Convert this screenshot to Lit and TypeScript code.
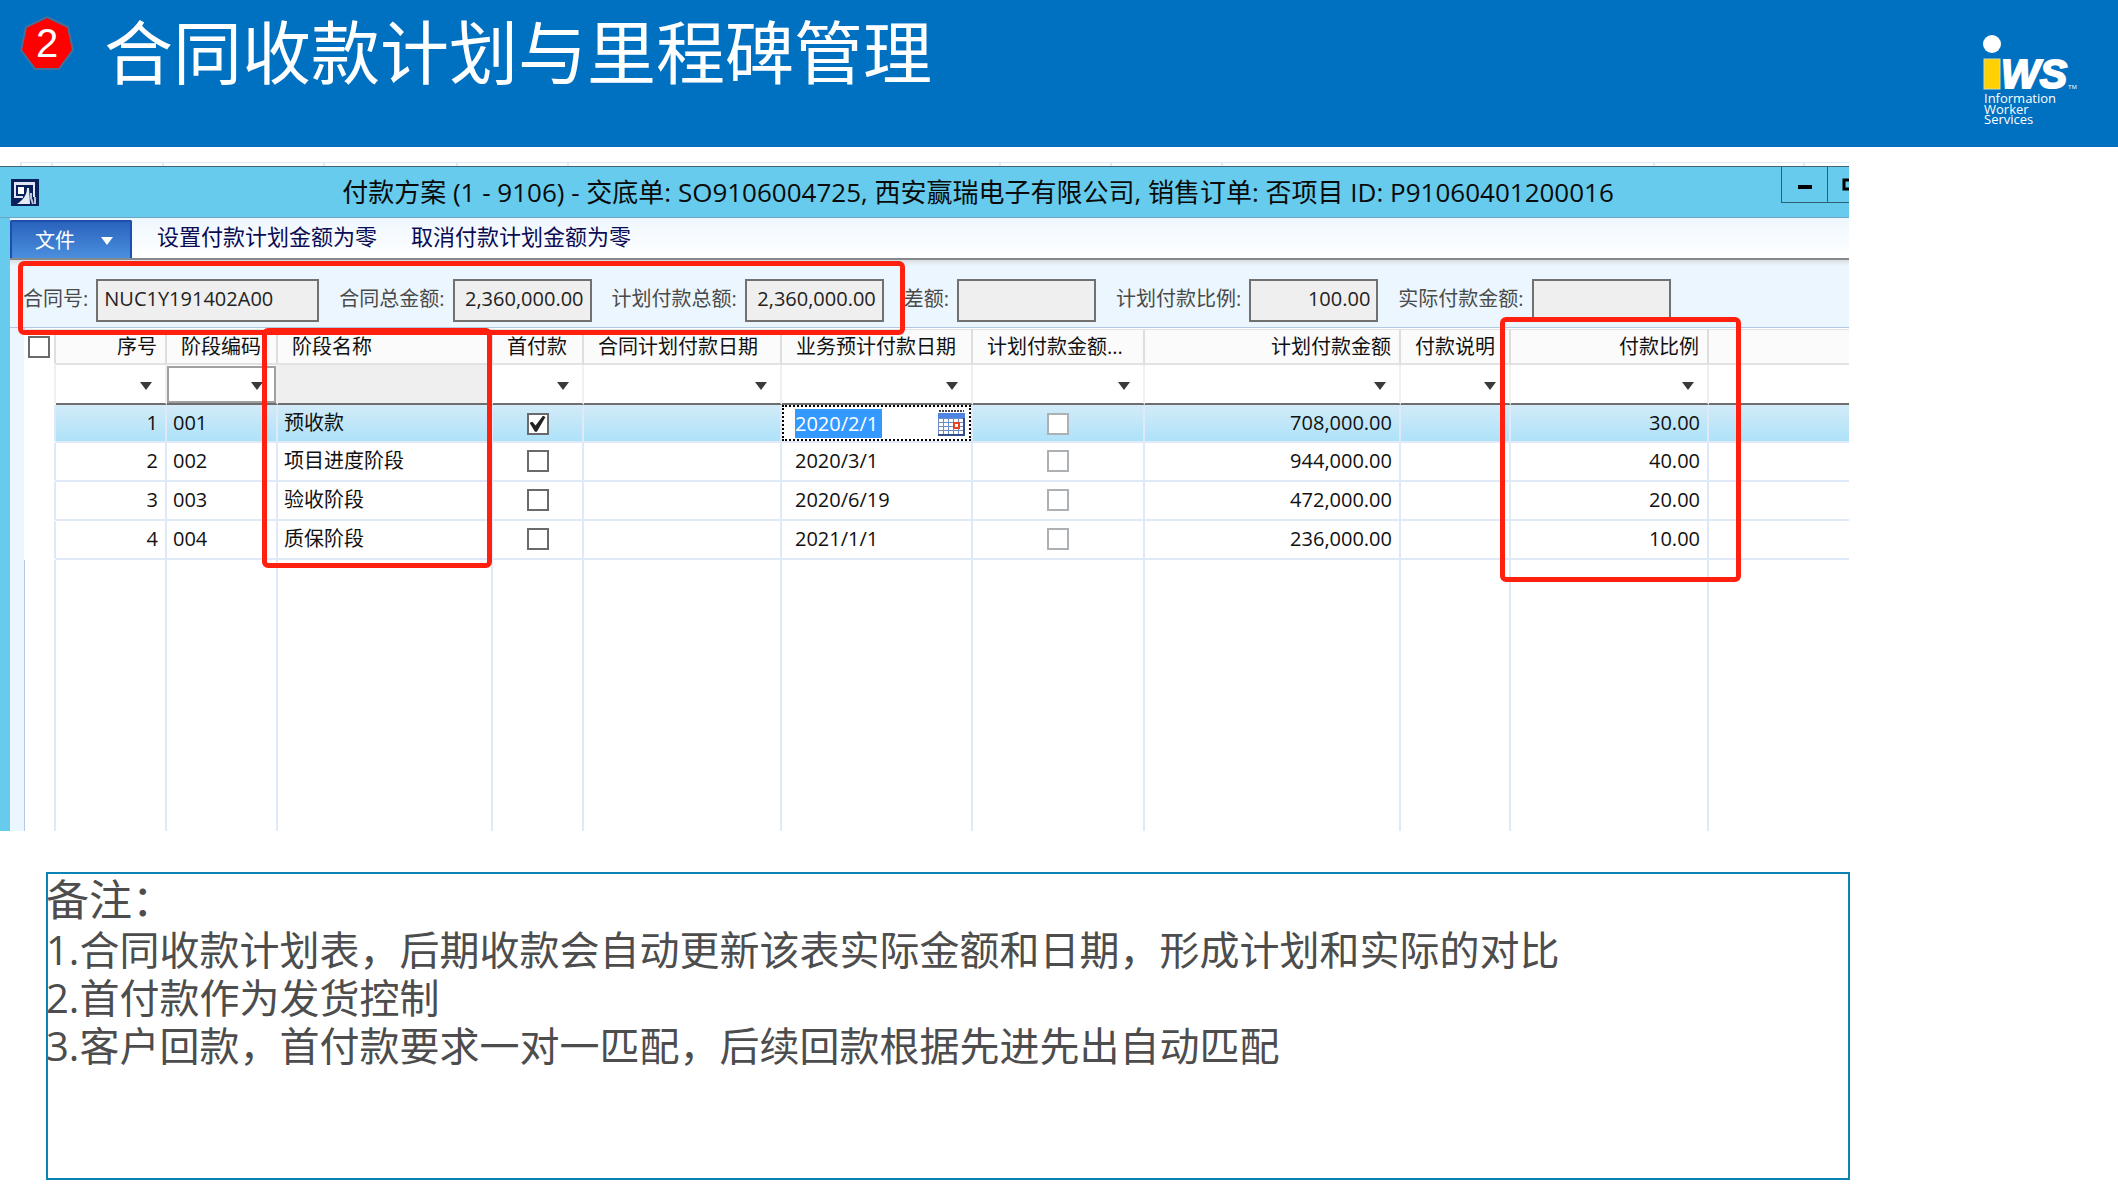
import { LitElement, html, css, svg } from "lit";
import { customElement, property } from "lit/decorators.js";
import { classMap } from "lit/directives/class-map.js";

const caret = html`<svg class="caret" width="12" height="8" viewBox="0 0 12 8" aria-hidden="true">
  <path d="M0 0H12L6 8Z" fill="currentColor" />
</svg>`;

interface Stage {
  seq: number;
  code: string;
  name: string;
  first: boolean;
  date: string;
  amount: string;
  ratio: string;
}

const stages: Stage[] = [
  { seq: 1, code: "001", name: "预收款", first: true, date: "2020/2/1", amount: "708,000.00", ratio: "30.00" },
  { seq: 2, code: "002", name: "项目进度阶段", first: false, date: "2020/3/1", amount: "944,000.00", ratio: "40.00" },
  { seq: 3, code: "003", name: "验收阶段", first: false, date: "2020/6/19", amount: "472,000.00", ratio: "20.00" },
  { seq: 4, code: "004", name: "质保阶段", first: false, date: "2021/1/1", amount: "236,000.00", ratio: "10.00" },
];

const columns = [
  { key: "seq", title: "序号", num: true },
  { key: "code", title: "阶段编码" },
  { key: "name", title: "阶段名称" },
  { key: "first", title: "首付款" },
  { key: "plan", title: "合同计划付款日期" },
  { key: "date", title: "业务预计付款日期" },
  { key: "flag", title: "计划付款金额..." },
  { key: "amount", title: "计划付款金额", num: true },
  { key: "memo", title: "付款说明" },
  { key: "ratio", title: "付款比例", num: true },
];

const fields = [
  { id: "contract", label: "合同号:", value: "NUC1Y191402A00", size: "wide" },
  { id: "total", label: "合同总金额:", value: "2,360,000.00", size: "num" },
  { id: "planned", label: "计划付款总额:", value: "2,360,000.00", size: "num" },
  { id: "diff", label: "差额:", value: "", size: "num" },
  { id: "percent", label: "计划付款比例:", value: "100.00", size: "num short" },
  { id: "actual", label: "实际付款金额:", value: "", size: "num" },
];

@customElement("slide-header")
export class SlideHeader extends LitElement {
  @property() number = "";
  @property() heading = "";

  static styles = css`
    :host {
      display: flex;
      align-items: flex-start;
      height: 147px;
      box-sizing: border-box;
      padding: 0 40px 0 20px;
      background: #0070c0;
      color: #fff;
    }
    .badge {
      display: grid;
      place-items: center;
      width: 54px;
      height: 56px;
      margin-top: 15px;
    }
    .badge svg,
    .badge span {
      grid-area: 1 / 1;
    }
    .badge span {
      font: 40px/40px "Liberation Sans", sans-serif;
    }
    h1 {
      flex: 1;
      margin: 0 0 0 30px;
      font: 400 69px/98px "Noto Sans CJK SC", sans-serif;
      white-space: nowrap;
    }
    .logo {
      flex: none;
      margin-top: 34px;
    }
    .mark {
      font: italic 700 41px "Liberation Sans", sans-serif;
      stroke: #fff;
      stroke-width: 2px;
    }
    .tm {
      font: 6px "Liberation Sans", sans-serif;
    }
    .name {
      font: 13px "Open Sans", sans-serif;
    }
  `;

  render() {
    return html`
      <div class="badge">
        <svg width="54" height="56" viewBox="0 0 54 56" aria-hidden="true">
          <path d="M27 2L48 12L53 35L39 54H15L1 35L6 12Z" fill="#f00" stroke="#41719c" stroke-width="2" />
        </svg>
        <span>${this.number}</span>
      </div>
      <h1>${this.heading}</h1>
      <svg class="logo" width="96" height="96" viewBox="0 0 96 96" fill="#fff" role="img" aria-label="iWS">
        <circle cx="10" cy="10" r="9" />
        <rect x="2" y="25" width="16" height="30" fill="#ffd100" stroke="#d9dca0" stroke-width="1" />
        <text class="mark" x="19" y="54">WS</text>
        <text class="tm" x="86" y="55">TM</text>
        <text class="name" x="2" y="69">Information</text>
        <text class="name" x="2" y="80">Worker</text>
        <text class="name" x="2" y="90">Services</text>
      </svg>
    `;
  }
}

@customElement("payment-grid")
export class PaymentGrid extends LitElement {
  static styles = css`
    :host {
      display: block;
      background: #fff;
    }
    table {
      width: 100%;
      table-layout: fixed;
      border-collapse: separate;
      border-spacing: 0;
      font-size: 20px;
      line-height: 28px;
      color: #111;
    }
    .c-pick { width: 32px; }
    .c-seq, .c-code { width: 111px; }
    .c-name { width: 215px; }
    .c-first { width: 91px; }
    .c-plan, .c-ratio { width: 198px; }
    .c-date { width: 191px; }
    .c-flag { width: 172px; }
    .c-amount { width: 256px; }
    .c-memo { width: 110px; }
    th, td {
      box-sizing: border-box;
      padding: 0;
      border-right: 2px solid #dfe9f8;
      white-space: nowrap;
      text-align: left;
      font-weight: 400;
      overflow: hidden;
    }
    tr > :last-child { border-right: 0; }
    thead th {
      height: 36px;
      padding: 0 0 0 14px;
      border-top: 1px solid #e2e2e2;
      border-bottom: 2px solid #e2e2e2;
      border-right-color: #dedede;
      background: #fbfbfb;
    }
    thead th.num {
      padding: 0 8px 0 0;
      text-align: right;
    }
    thead th.pick {
      padding: 0 0 2px 4px;
      border-bottom-color: #fff;
      background: #fff;
    }
    .filters td {
      height: 40px;
      border-bottom: 2px solid #6e6e6e;
      border-right-color: #f0f0f0;
    }
    .filters td.name { background: #efefef; }
    .filter {
      display: flex;
      align-items: center;
      justify-content: flex-end;
      box-sizing: border-box;
      width: 100%;
      height: 38px;
      padding: 3px 13px 0 0;
      border: 0;
      background: transparent;
      color: #3a3a3a;
    }
    .filter.boxed {
      height: 37px;
      padding-right: 11px;
      border: 2px solid #a0a0a0;
      background: #fff;
    }
    .row td {
      height: 39px;
      padding-bottom: 2px;
      border-bottom: 2px solid #dfe9f8;
    }
    .row.current td { height: 38px; padding-bottom: 0; }
    .row td.num { text-align: right; padding-right: 7px; }
    .row td.code, .row td.name { padding-left: 6px; }
    .row td.date { padding-left: 13px; }
    .row td.check { text-align: center; }
    .row.current td:not(.pick) {
      background: linear-gradient(#d2ebf8, #aee2f9);
    }
    .row.current td.date {
      padding: 0;
    }
    .filters td.pick,
    .row td.pick {
      border-bottom-color: #fff;
      background: #fff;
    }
    .filler td { height: 271px; }
    input[type="checkbox"] {
      appearance: none;
      display: inline-grid;
      place-items: center;
      box-sizing: border-box;
      width: 22px;
      height: 22px;
      margin: 0;
      border: 2px solid #6a6a6a;
      background: #fff;
      vertical-align: middle;
    }
    .check input[type="checkbox"] { margin-bottom: 2px; }
    input[type="checkbox"]:disabled { border-color: #adb1b4; }
    input[type="checkbox"]:checked::before {
      content: "";
      width: 16px;
      height: 16px;
      background: #222;
      clip-path: polygon(0 45%, 18% 38%, 38% 62%, 84% 0, 100% 8%, 46% 100%, 34% 100%);
    }
    .editor {
      display: flex;
      align-items: center;
      justify-content: space-between;
      box-sizing: border-box;
      height: 36px;
      padding: 0 4px 0 11px;
      border: 2px dotted #000;
      background: #fff;
    }
    .editor input {
      width: 87px;
      height: 29px;
      box-sizing: border-box;
      padding: 0;
      border: 0;
      background: #39f;
      color: #fff;
      font: inherit;
    }
    .editor button {
      display: flex;
      padding: 0;
      border: 0;
      background: none;
    }
  `;

  private calendar() {
    return html`<svg width="27" height="26" viewBox="0 0 27 26" aria-hidden="true">
      <rect x="0" y="3" width="27" height="22" fill="#6d8cc4" />
      <rect x="0" y="3" width="27" height="5" fill="#4f83e4" />
      <path d="M1 1H26" stroke="#444" stroke-width="2" stroke-dasharray="2 1" />
      ${[1, 6, 11, 16, 21].map((x) => [9, 13, 17, 21].map((y) => svg`<rect x=${x} y=${y} width="4" height="3" fill="#fff" />`))}
      <path d="M26 8V25H0" stroke="#34508c" stroke-width="2" fill="none" />
      <rect x="16" y="13" width="5" height="5" fill="#fff" stroke="#f0401c" stroke-width="2" />
    </svg>`;
  }

  private row(s: Stage, current: boolean) {
    return html`<tr class=${classMap({ row: true, current })}>
      <td class="pick"></td>
      <td class="num">${s.seq}</td>
      <td class="code">${s.code}</td>
      <td class="name">${s.name}</td>
      <td class="check"><input type="checkbox" aria-label="首付款" .checked=${s.first} /></td>
      <td></td>
      <td class="date">
        ${current
          ? html`<div class="editor">
              <input type="text" aria-label="业务预计付款日期" .value=${s.date} />
              <button type="button" aria-label="日期">${this.calendar()}</button>
            </div>`
          : s.date}
      </td>
      <td class="check"><input type="checkbox" aria-label="计划付款金额" disabled /></td>
      <td class="num">${s.amount}</td>
      <td></td>
      <td class="num">${s.ratio}</td>
      <td></td>
    </tr>`;
  }

  render() {
    return html`<table>
      <colgroup>
        <col class="c-pick" />
        ${columns.map((c) => html`<col class="c-${c.key}" />`)}
        <col />
      </colgroup>
      <thead>
        <tr>
          <th class="pick"><input type="checkbox" aria-label="全选" /></th>
          ${columns.map((c) => html`<th scope="col" class=${classMap({ num: !!c.num })}>${c.title}</th>`)}
          <th></th>
        </tr>
      </thead>
      <tbody>
        <tr class="filters">
          <td class="pick"></td>
          ${columns.map((c) =>
            c.key === "name"
              ? html`<td class="name"></td>`
              : html`<td>
                  <button type="button" class=${classMap({ filter: true, boxed: c.key === "code" })} aria-label=${c.title}>${caret}</button>
                </td>`
          )}
          <td></td>
        </tr>
        ${stages.map((s, i) => this.row(s, i === 0))}
        <tr class="filler">
          <td class="pick"></td>
          ${columns.map(() => html`<td></td>`)}
          <td></td>
        </tr>
      </tbody>
    </table>`;
  }
}

@customElement("payment-window")
export class PaymentWindow extends LitElement {
  static styles = css`
    :host {
      display: block;
      position: relative;
      font-family: "Open Sans", "Noto Sans CJK SC", sans-serif;
    }
    .titlebar {
      display: flex;
      align-items: center;
      height: 52px;
      box-sizing: border-box;
      padding-left: 11px;
      border-top: 1px solid #3f6675;
      border-bottom: 1px solid #6da5c4;
      background: #66cbec;
    }
    .app-icon { flex: none; }
    .title {
      flex: 1;
      margin-left: 136px;
      text-align: center;
      font-size: 26px;
      line-height: 36px;
      color: #0a0a0a;
      white-space: nowrap;
    }
    .controls {
      display: flex;
      align-self: flex-start;
      width: 68px;
      overflow: hidden;
    }
    .controls button {
      flex: none;
      display: flex;
      align-items: center;
      justify-content: center;
      box-sizing: border-box;
      width: 47px;
      height: 36px;
      margin-right: -1px;
      padding: 0;
      border: 1px solid #2f5f72;
      border-top: 0;
      background: transparent;
    }
    .body {
      padding-left: 10px;
      background: linear-gradient(90deg, #66cbec 10px, #ecf6fe 10px);
    }
    .menu {
      display: flex;
      align-items: flex-end;
      height: 42px;
      box-sizing: border-box;
      border-bottom: 2px solid #85898d;
      background: linear-gradient(#eef7fe, #fff);
    }
    .menu button {
      padding: 0;
      border: 0;
      background: none;
      color: #0c0c55;
      font: 22px/32px "Open Sans", "Noto Sans CJK SC", sans-serif;
      margin: 0 0 6px 34px;
    }
    .menu .file {
      display: flex;
      align-items: center;
      gap: 26px;
      width: 122px;
      height: 38px;
      box-sizing: border-box;
      margin: 0 -9px 0 0;
      padding: 2px 0 0 23px;
      border: 2px solid #1f4fae;
      border-bottom: 0;
      border-radius: 2px 2px 0 0;
      background: linear-gradient(#2a63bd, #4a8fdd);
      color: #fff;
      font-size: 20px;
    }
    .fields {
      display: flex;
      gap: 20px;
      height: 68px;
      box-sizing: border-box;
      padding: 19px 0 0 13px;
      border-bottom: 1px solid #b4c8e4;
      background: linear-gradient(#dadfe3, #ecf6fe 6px);
    }
    .field {
      display: flex;
      align-items: center;
      gap: 8px;
      height: 43px;
    }
    label {
      padding-bottom: 4px;
      font-size: 20px;
      line-height: 28px;
      color: #4a4a4a;
      white-space: nowrap;
    }
    .field input {
      box-sizing: border-box;
      width: 139px;
      height: 43px;
      padding: 0 6px 4px;
      border: 2px solid #717171;
      border-radius: 0;
      background: #efefef;
      color: #222;
      font: 20px/28px "Open Sans", sans-serif;
    }
    .field input.wide { width: 223px; }
    .field input.num { text-align: right; }
    .field input.short { width: 129px; }
    .grid {
      margin-left: 14px;
      padding-top: 1px;
      border-left: 1px solid #b4c8e4;
      background: #fff;
    }
    payment-grid { margin-left: -1px; background: none; }
    .callout {
      position: absolute;
      box-sizing: border-box;
      border: 5px solid #ff200f;
      border-radius: 6px;
      pointer-events: none;
    }
    .callout.contract { left: 18px; top: 95px; width: 887px; height: 74px; }
    .callout.stage { left: 262px; top: 162px; width: 230px; height: 240px; }
    .callout.ratio { left: 1500px; top: 151px; width: 241px; height: 265px; }
  `;

  render() {
    return html`
      <div class="titlebar">
        <svg class="app-icon" width="28" height="27" viewBox="0 0 28 27" aria-hidden="true">
          <rect width="28" height="27" fill="#08215a" />
          <path d="M3 3H24V18H22V6H5V17H12V19H3Z" fill="#dfe5f2" />
          <rect x="7" y="8" width="6" height="7" fill="#fff" />
          <path d="M18 9L19 25H6C12 21 16 16 16 9Z" fill="#e6eaf4" />
          <path d="M20 14V19L22 25M24 18V25" fill="none" stroke="#b9c3dc" stroke-width="2" />
        </svg>
        <div class="title">付款方案 (1 - 9106) - 交底单: SO9106004725, 西安赢瑞电子有限公司, 销售订单: 否项目 ID: P91060401200016</div>
        <div class="controls">
          <button type="button" aria-label="最小化">
            <svg width="14" height="14" viewBox="0 0 14 14"><path d="M0 9H14" stroke="#000" stroke-width="4" /></svg>
          </button>
          <button type="button" aria-label="最大化">
            <svg width="18" height="14" viewBox="0 0 18 14"><path d="M2 2H16V11H2Z" stroke="#000" stroke-width="3" fill="none" /></svg>
          </button>
        </div>
      </div>
      <div class="body">
        <div class="menu">
          <button type="button" class="file">文件 ${caret}</button>
          <button type="button">设置付款计划金额为零</button>
          <button type="button">取消付款计划金额为零</button>
        </div>
        <div class="fields">
          ${fields.map(
            (f) => html`<div class="field">
              <label for=${f.id}>${f.label}</label>
              <input id=${f.id} class=${f.size} type="text" readonly .value=${f.value} />
            </div>`
          )}
        </div>
        <div class="grid"><payment-grid></payment-grid></div>
      </div>
      <div class="callout contract"></div>
      <div class="callout stage"></div>
      <div class="callout ratio"></div>
    `;
  }
}

@customElement("app-root")
export class AppRoot extends LitElement {
  static styles = css`
    :host {
      display: block;
      min-height: 100vh;
      background: #fff;
    }
    main {
      margin-right: 269px;
    }
    .rule {
      display: flex;
      height: 4px;
      margin: 15px 0 0 20px;
      box-sizing: border-box;
      border-top: 1px solid #dfe9f8;
    }
    .rule span {
      box-sizing: border-box;
      border-left: 2px solid #dfe9f8;
    }
    .w31 { width: 31px; }
    .w111 { width: 111px; }
    .w133 { width: 133px; }
    .w150 { width: 150px; }
    .w161 { width: 161px; }
    .w432 { width: 432px; }
    .rest { flex: 1; }
    .notes {
      box-sizing: border-box;
      min-height: 308px;
      margin: 41px -1px 0 46px;
      padding-top: 2px;
      outline: 2px solid #0a82b4;
      outline-offset: -2px;
      color: #4d4d4d;
      font-family: "Open Sans", "Noto Sans CJK SC", sans-serif;
    }
    h2, p {
      margin: 0;
      font-weight: 400;
    }
    h2 {
      font-size: 43px;
      line-height: 52px;
    }
    p {
      font-size: 40px;
      line-height: 48px;
    }
  `;

  render() {
    const ticks = ["w31", "w111", "w161", "w133", "w111", "w432", "w111", "w111", "w432", "w150", "rest"];
    return html`
      <slide-header number="2" heading="合同收款计划与里程碑管理"></slide-header>
      <main>
        <div class="rule">${ticks.map((w) => html`<span class=${w}></span>`)}</div>
        <payment-window></payment-window>
        <section class="notes">
          <h2>备注：</h2>
          <p>1.合同收款计划表，后期收款会自动更新该表实际金额和日期，形成计划和实际的对比</p>
          <p>2.首付款作为发货控制</p>
          <p>3.客户回款，首付款要求一对一匹配，后续回款根据先进先出自动匹配</p>
        </section>
      </main>
    `;
  }
}
